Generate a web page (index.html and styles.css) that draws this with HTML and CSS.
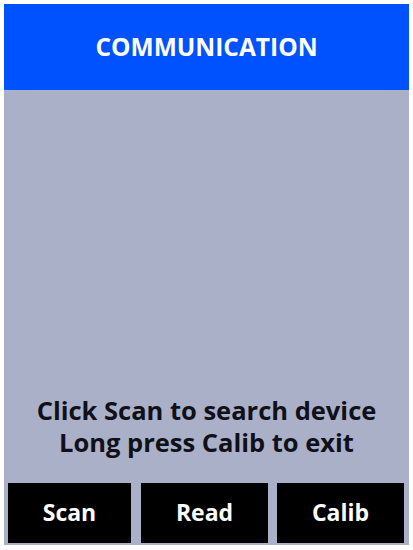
FILE: index.html
```html
<!DOCTYPE html>
<html>
<head>
<meta charset="utf-8">
<link rel="stylesheet" href="styles.css">
</head>
<body>
<div class="screen">
  <header class="title-bar">COMMUNICATION</header>
  <main class="content">
    <p class="message">Click Scan to search device<br>Long press Calib to exit</p>
  </main>
  <nav class="buttons">
    <div class="btn btn-scan">Scan</div>
    <div class="btn btn-read">Read</div>
    <div class="btn btn-calib">Calib</div>
  </nav>
</div>
</body>
</html>
```
FILE: styles.css
```css
html, body {
  margin: 0;
  padding: 0;
  background: #ffffff;
}
body {
  width: 413px;
  height: 550px;
  padding: 4px 4px 0 4px;
  box-sizing: border-box;
  font-family: "Open Sans", "Noto Sans", sans-serif;
}
.screen {
  width: 405px;
  height: 541px;
  background: #aab0c8;
  display: flex;
  flex-direction: column;
}
.title-bar {
  height: 86px;
  background: #0052ff;
  color: #ffffff;
  font-weight: 700;
  font-size: 24.5px;
  display: flex;
  align-items: center;
  justify-content: center;
  padding-bottom: 1px;
  box-sizing: border-box;
}
.content {
  flex: 1;
  display: flex;
  align-items: flex-end;
  justify-content: center;
}
.message {
  margin: 0 0 25px 0;
  text-align: center;
  font-weight: 700;
  font-size: 25.5px;
  line-height: 32px;
  color: #101018;
}
.buttons {
  display: flex;
  padding: 0 4px 2px 4px;
  gap: 9px;
  height: 62px;
  box-sizing: border-box;
}
.btn {
  background: #000000;
  color: #ffffff;
  font-weight: 700;
  font-size: 23px;
  display: flex;
  align-items: center;
  justify-content: center;
  padding-bottom: 2px;
  box-sizing: border-box;
}
.btn-scan { width: 123px; margin-right: 1px; }
.btn-read { width: 127px; }
.btn-calib { width: 127px; }
```
